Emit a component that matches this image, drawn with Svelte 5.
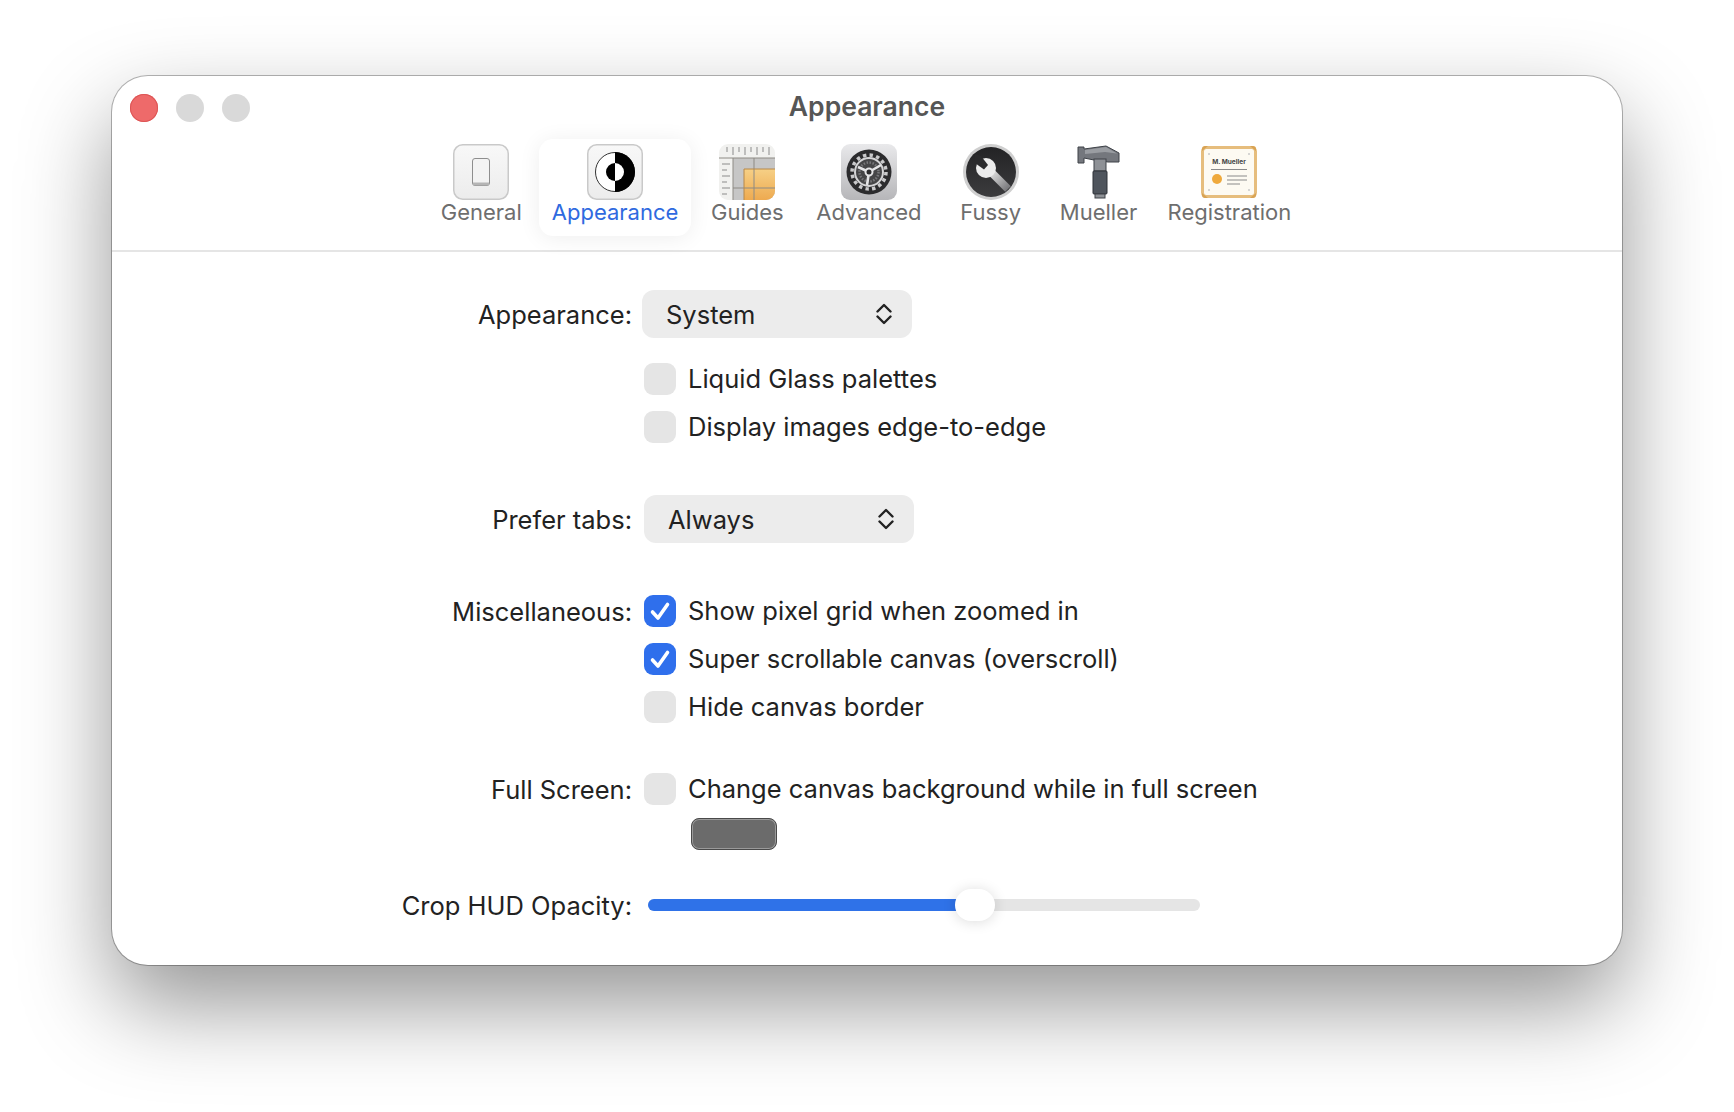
<script>
	const tabs = ['General', 'Appearance', 'Guides', 'Advanced', 'Fussy', 'Mueller', 'Registration'];
	const guideTicks = [8, 14, 20, 26, 32, 38, 44, 50];
</script>

{#snippet icon(name)}
	<svg class="tab-icon" viewBox="0 0 56 56" width="56" height="56" aria-hidden="true">
		<defs>
			<linearGradient id="tile-{name}" x1="0" y1="0" x2="0" y2="1">
				<stop offset="0" stop-color="#f8f8f8" />
				<stop offset="1" stop-color="#ececec" />
			</linearGradient>
		</defs>
		{#if name === 'General'}
			<rect x=".75" y=".75" width="54.5" height="54.5" rx="9" fill="url(#tile-General)" stroke="#c9c9c9" stroke-width="1.5" />
			<rect x="19.5" y="14.5" width="17" height="27" rx="2.5" fill="#f3f3f3" stroke="#8e8e8e" />
			<path d="M20 38.5h16v1.5a1.5 1.5 0 0 1-1.500 1.500h-13a1.500 1.500 0 0 1-1.500-1.500z" fill="#b5b5b5" />
		{:else if name === 'Appearance'}
			<rect x=".75" y=".75" width="54.500" height="54.500" rx="9" fill="url(#tile-Appearance)" stroke="#c9c9c9" stroke-width="1.500" />
			<circle cx="28" cy="28" r="19.500" fill="#fff" stroke="#333" />
			<path d="M28 8a20 20 0 0 1 0 40z" fill="#000" />
			<circle cx="28" cy="28" r="9" fill="#fff" />
			<path d="M28 19a9 9 0 0 0 0 18z" fill="#000" />
		{:else if name === 'Guides'}
			<defs>
				<linearGradient id="guide-fill" x1="0" y1="0" x2="0" y2="1">
					<stop offset="0" stop-color="#f6d086" />
					<stop offset="1" stop-color="#eeaa50" />
				</linearGradient>
				<clipPath id="guide-clip"><rect width="56" height="56" rx="9" /></clipPath>
			</defs>
			<g clip-path="url(#guide-clip)">
				<rect width="56" height="56" fill="#f1f1ef" />
				<rect x="14" y="14" width="42" height="42" fill="#c6c6c6" />
				<rect x="25" y="25" width="31" height="31" fill="url(#guide-fill)" />
				<path d="M0 14h56M14 14v42M35 14v42M14 44h42" stroke="#8d8a84" fill="none" />
				<path d="M25 25h31M25 25v31" stroke="#b6884a" fill="none" />
				{#each guideTicks as x}
					<path d="M{x} 3v{x % 12 === 2 ? 8 : 5}" stroke="#8b8b8b" />
				{/each}
				<path d="M3 20h8M3 26h5M3 32h8M3 38h5M3 44h8M3 50h5" stroke="#8b8b8b" />
			</g>
		{:else if name === 'Advanced'}
			<defs>
				<linearGradient id="adv-tile" x1="0" y1="0" x2="0" y2="1">
					<stop offset="0" stop-color="#e9e9eb" />
					<stop offset="1" stop-color="#b6b6b9" />
				</linearGradient>
			</defs>
			<rect width="56" height="56" rx="9" fill="url(#adv-tile)" />
			<circle cx="28" cy="28" r="22.500" fill="#2b2b2d" />
			<circle cx="28" cy="28" r="17" fill="none" stroke="#c9c9cb" stroke-width="3.500" stroke-dasharray="3.400 3.280" />
			<circle cx="28" cy="28" r="14" fill="#454547" stroke="#d4d4d6" stroke-width="2" />
			<circle cx="28" cy="28" r="9.500" fill="none" stroke="#77777a" stroke-width="2.500" stroke-dasharray="1.500 1.500" />
			<path d="M28 28L40 21M28 28L17 23M28 28L26 41" stroke="#e4e4e6" stroke-width="2.600" fill="none" />
			<circle cx="28" cy="28" r="3.500" fill="#2b2b2d" stroke="#e4e4e6" stroke-width="2" />
		{:else if name === 'Fussy'}
			<defs>
				<linearGradient id="fussy-bg" x1="0" y1="0" x2="0" y2="1">
					<stop offset="0" stop-color="#232325" />
					<stop offset="1" stop-color="#3c3c3e" />
				</linearGradient>
				<linearGradient id="wrench-handle" x1="0" y1="0" x2="1" y2="1">
					<stop offset="0" stop-color="#e8e8e8" />
					<stop offset="1" stop-color="#77777a" />
				</linearGradient>
			</defs>
			<circle cx="28" cy="28" r="28" fill="#cfcfcf" />
			<circle cx="28" cy="28" r="25" fill="url(#fussy-bg)" />
			<path d="M27 27L45 45" stroke="url(#wrench-handle)" stroke-width="8" fill="none" />
			<circle cx="23" cy="24" r="10" fill="#ececec" />
			<path d="M18 12L25 21L21 25.500L12 19V10z" fill="#2a2a2c" />
		{:else if name === 'Mueller'}
			<path d="M7 3h6v2l22-3 13 7v9H37l-14-2-10-2v5H7z" fill="#74777d" stroke="#3e4248" />
			<path d="M14 6l21-3 11 6.500-12-1.500-20 2z" fill="#9a9da2" />
			<rect x="23" y="15" width="12" height="12" fill="#8e9196" stroke="#3e4248" />
			<rect x="22" y="27" width="14" height="23" rx="1" fill="#4f555d" stroke="#2f3339" />
			<rect x="24" y="50" width="10" height="4" fill="#8e9196" stroke="#3e4248" />
		{:else}
			<rect x="1.500" y="3.500" width="53" height="49" rx="4" fill="#fdfaf2" stroke="#e6bd7d" stroke-width="3" />
			<path d="M1 7V5a3 3 0 0 1 3-3h3zM55 7V5a3 3 0 0 0-3-3h-3zM1 49v2a3 3 0 0 0 3 3h3zM55 49v2a3 3 0 0 1-3 3h-3z" fill="#d9a353" />
			<circle cx="8" cy="10" r="1" fill="#c9c9c9" />
			<circle cx="48" cy="10" r="1" fill="#c9c9c9" />
			<circle cx="8" cy="46" r="1" fill="#c9c9c9" />
			<circle cx="48" cy="46" r="1" fill="#c9c9c9" />
			<text class="cert-name" x="28" y="20" text-anchor="middle">M. Mueller</text>
			<path d="M10 25.500h36" stroke="#8a8a8a" />
			<circle cx="16" cy="35" r="5" fill="#efa93c" />
			<path d="M26 32h20M26 36h20M26 40h13" stroke="#8a8a8a" />
		{/if}
	</svg>
{/snippet}

{#snippet chevrons()}
	<svg class="chevrons" viewBox="0 0 16 22" width="16" height="22" aria-hidden="true">
		<path d="M1.500 8.500L8 2 14.500 8.500M1.500 13.500L8 20 14.500 13.500" fill="none" stroke="#222" stroke-width="2.400" stroke-linecap="round" stroke-linejoin="round" />
	</svg>
{/snippet}

{#snippet box(checked)}
	<span class="box" class:checked>
		{#if checked}
			<svg viewBox="0 0 32 32" width="32" height="32" aria-hidden="true">
				<path d="M8.500 17L14 23L23.500 9.500" fill="none" stroke="#fff" stroke-width="3.600" stroke-linecap="round" stroke-linejoin="round" />
			</svg>
		{/if}
	</span>
{/snippet}

<div class="page">
	<div class="window">
		<header class="titlebar">
			<div class="lights">
				<span class="light close"></span>
				<span class="light"></span>
				<span class="light"></span>
			</div>
			<h1>Appearance</h1>
		</header>

		<nav class="toolbar">
			{#each tabs as tab}
				<div class="tab" class:active={tab === 'Appearance'}>
					{@render icon(tab)}
					<span>{tab}</span>
				</div>
			{/each}
		</nav>

		<main class="form">
			<div class="row">
				<div class="label">Appearance:</div>
				<div class="popup first">System {@render chevrons()}</div>
			</div>

			<div class="row sub">
				<div class="label"></div>
				<div class="checks">
					<div class="check">{@render box(false)} <span>Liquid Glass palettes</span></div>
					<div class="check">{@render box(false)} <span>Display images edge-to-edge</span></div>
				</div>
			</div>

			<div class="row section">
				<div class="label">Prefer tabs:</div>
				<div class="popup">Always {@render chevrons()}</div>
			</div>

			<div class="row section misc">
				<div class="label">Miscellaneous:</div>
				<div class="checks">
					<div class="check">{@render box(true)} <span>Show pixel grid when zoomed in</span></div>
					<div class="check">{@render box(true)} <span>Super scrollable canvas (overscroll)</span></div>
					<div class="check">{@render box(false)} <span>Hide canvas border</span></div>
				</div>
			</div>

			<div class="row fullscreen">
				<div class="label">Full Screen:</div>
				<div class="checks">
					<div class="check">{@render box(false)} <span>Change canvas background while in full screen</span></div>
					<div class="well"></div>
				</div>
			</div>

			<div class="row slider-row">
				<div class="label">Crop HUD Opacity:</div>
				<div class="slider">
					<div class="track">
						<div class="fill"></div>
					</div>
					<div class="thumb"></div>
				</div>
			</div>
		</main>
	</div>
</div>

<style>
	:global(body) {
		background: #fff;
	}

	.page {
		box-sizing: border-box;
		height: 1112px;
		padding: 76px 112px 0;
		font-family: Inter, 'Liberation Sans', sans-serif;
		overflow: hidden;
	}

	.window {
		box-sizing: border-box;
		height: 889px;
		background: #fff;
		border-radius: 36px;
		box-shadow:
			0 0 0 1px rgba(0, 0, 0, 0.28),
			0 40px 90px rgba(0, 0, 0, 0.42);
	}

	.titlebar {
		display: grid;
		grid-template-columns: 1fr auto 1fr;
		align-items: center;
		height: 63px;
		padding: 0 18px;
	}

	.lights {
		display: flex;
		gap: 18px;
		margin-top: 1px;
	}

	.light {
		width: 28px;
		height: 28px;
		border-radius: 50%;
		background: #d9d9d9;
	}

	.close {
		background: #ee6a6a;
		box-shadow: inset 0 0 0 1px #dd5555;
	}

	h1 {
		margin: -3px 0 0;
		font-size: 26.500px;
		font-weight: 600;
		color: #565656;
	}

	.toolbar {
		display: flex;
		justify-content: center;
		gap: 4px;
		height: 111px;
		padding-right: 2px;
		border-bottom: 2px solid #e5e5e5;
	}

	.tab {
		display: flex;
		flex-direction: column;
		align-items: center;
		min-width: 104px;
		height: 97px;
		padding: 5px 13px 0;
		box-sizing: border-box;
		border-radius: 14px;
		font-size: 22px;
		color: #6e6e6e;
	}

	.tab span {
		line-height: 26px;
		margin-top: -1px;
	}

	.active {
		background: #fff;
		color: #2f6ae0;
		box-shadow: 0 2px 22px rgba(0, 0, 0, 0.07);
	}

	.tab-icon {
		display: block;
	}

	.cert-name {
		font-size: 6.500px;
		font-weight: 700;
		fill: #444;
	}

	.form {
		padding-top: 38px;
		font-size: 25.500px;
		color: #222;
	}

	.row {
		display: grid;
		grid-template-columns: 520px auto;
		column-gap: 12px;
		align-items: start;
	}

	.sub {
		margin-top: 24px;
	}

	.section {
		margin-top: 52px;
	}

	.misc {
		margin-top: 51px;
	}

	.fullscreen {
		margin-top: 50px;
	}

	.slider-row {
		margin-top: 39px;
	}

	.label {
		text-align: right;
		line-height: 48px;
		padding-top: 1px;
	}

	.check + .check {
		margin-top: 16px;
	}

	.row:has(.checks) .label {
		line-height: 32px;
	}

	.slider-row .label {
		line-height: 32px;
	}

	.popup {
		box-sizing: border-box;
		display: flex;
		align-items: center;
		justify-content: space-between;
		width: 270px;
		height: 48px;
		padding: 0 20px 0 24px;
		border-radius: 12px;
		background: #ececec;
	}

	.first {
		margin-left: -2px;
	}

	.check {
		display: flex;
		align-items: center;
		gap: 12px;
		height: 32px;
		white-space: nowrap;
	}

	.check span:last-child {
		margin-top: -1px;
	}

	.box {
		flex: none;
		width: 32px;
		height: 32px;
		border-radius: 9px;
		background: #e5e5e5;
	}

	.box svg {
		display: block;
	}

	.checked {
		background: #2f6fec;
	}

	.well {
		box-sizing: border-box;
		width: 86px;
		height: 32px;
		margin: 13px 0 0 47px;
		border: 1px solid #4a4a4a;
		border-radius: 8px;
		background: #6b6b6b;
		box-shadow: inset 0 0 0 1px #9a9a9a;
	}

	.slider {
		position: relative;
		width: 552px;
		height: 32px;
		margin-left: 4px;
		display: flex;
		align-items: center;
	}

	.track {
		width: 100%;
		height: 12px;
		border-radius: 6px;
		background: #e5e5e5;
		overflow: hidden;
	}

	.fill {
		width: 320px;
		height: 100%;
		background: #2f72e8;
	}

	.thumb {
		position: absolute;
		left: 307px;
		top: 0;
		width: 40px;
		height: 32px;
		border-radius: 16px;
		background: #fff;
		box-shadow: 0 1px 14px rgba(0, 0, 0, 0.14);
	}
</style>
